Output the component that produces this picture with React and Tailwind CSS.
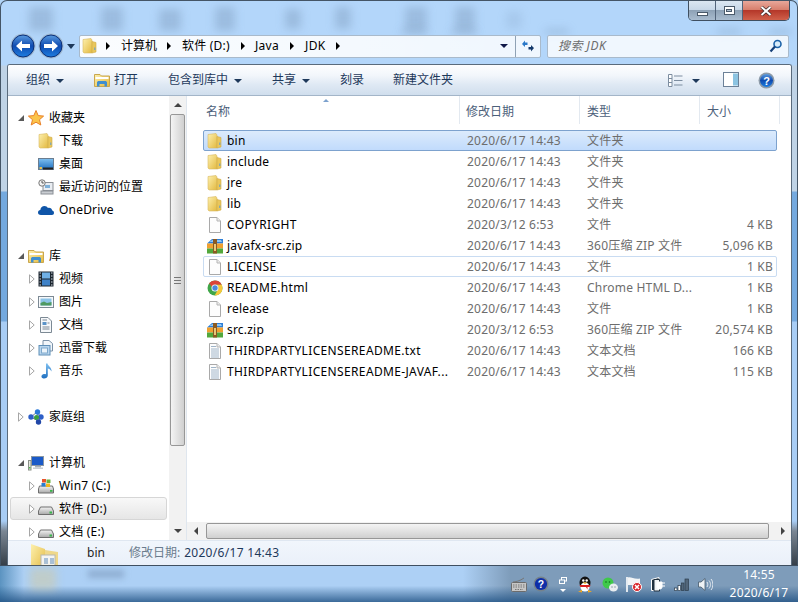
import React from 'react'

const Arrow = ({ className = '' }) => (
  <span className={`inline-block w-0 h-0 border-x-[4px] border-x-transparent border-t-[4px] border-t-[#1e395b] ${className}`} />
)

const CrumbArrow = () => (
  <span className="inline-block shrink-0 w-0 h-0 border-y-[4px] border-y-transparent border-l-[4px] border-l-black" />
)

const TreeOpen = () => (
  <svg width="6" height="6" viewBox="0 0 6 6" className="shrink-0"><path d="M6 0V6H0Z" fill="#595959" /></svg>
)

const TreeClosed = () => (
  <svg width="6" height="10" viewBox="0 0 6 10" className="shrink-0"><path d="M.5.8 5.2 5 .5 9.2Z" fill="#fff" stroke="#a6a6a6" /></svg>
)

const Defs = () => (
  <svg className="absolute w-0 h-0">
    <defs>
      <linearGradient id="fold" x1="0" y1="0" x2="1" y2="1">
        <stop offset="0" stopColor="#fdf0ae" />
        <stop offset="1" stopColor="#e3b93f" />
      </linearGradient>
      <linearGradient id="blue" x1="0" y1="0" x2="0" y2="1">
        <stop offset="0" stopColor="#7fc0f0" />
        <stop offset="1" stopColor="#1e6fc0" />
      </linearGradient>
      <linearGradient id="orb" x1="0" y1="0" x2="0" y2="1">
        <stop offset="0" stopColor="#5a9be0" />
        <stop offset=".5" stopColor="#0f4bb0" />
        <stop offset="1" stopColor="#1f7ee0" />
      </linearGradient>
      <linearGradient id="drive" x1="0" y1="0" x2="0" y2="1">
        <stop offset="0" stopColor="#f4f4f4" />
        <stop offset="1" stopColor="#a8a8a8" />
      </linearGradient>
    </defs>
  </svg>
)

const FolderIcon = () => (
  <svg width="16" height="16" viewBox="0 0 16 16">
    <path d="M1 1.500 9 .5 10 2V15H2L1 14Z" fill="url(#fold)" stroke="#d9b862" strokeWidth=".6" />
    <path d="M10 3.500 14 4.500V14L10 15Z" fill="#e9c65c" stroke="#d2ab45" strokeWidth=".6" />
    <rect x="12.300" y="9.500" width="1" height="2.500" fill="#5c9fd6" />
  </svg>
)

const DocIcon = ({ lines }) => (
  <svg width="16" height="16" viewBox="0 0 16 16">
    <path d="M2.500.5H10L13.500 4V15.500H2.500Z" fill="#fdfdfd" stroke="#a9a9a9" />
    <path d="M10 .5V4H13.500" fill="#ececec" stroke="#b5b5b5" />
    {lines && <path d="M4 3.500H9M4 6H12M4 8H12M4 10H12M4 12H12M4 14H12" stroke="#9fb4c8" strokeWidth="1" />}
  </svg>
)

const ZipIcon = () => (
  <svg width="16" height="16" viewBox="0 0 16 16">
    <path d="M0 5.500 5 1H16V5.500Z" fill="#2d7fd8" />
    <path d="M2 4 5.500 2H14L15 4Z" fill="#8fc6f4" />
    <rect y="5.500" width="16" height="5" fill="#f0a030" />
    <rect y="10.500" width="16" height="5" fill="#52a83c" />
    <rect x="6" y="1" width="4" height="14.500" fill="#8a5a22" />
    <rect x="7" y="6" width="2" height="7" fill="#e8c878" />
  </svg>
)

const ChromeIcon = () => (
  <svg width="16" height="16" viewBox="0 0 16 16">
    <circle cx="8" cy="8" r="7.500" fill="#3fa648" />
    <path d="M8 .5A7.500 7.500 0 0 1 14.700 4.700H8A3.300 3.300 0 0 0 4.900 7L2.100 3.300A7.500 7.500 0 0 1 8 .5Z" fill="#dc4437" />
    <path d="M14.700 4.700A7.500 7.500 0 0 1 7.600 15.500L10.700 10A3.300 3.300 0 0 0 11 6.400L10 4.700Z" fill="#f7c83a" />
    <circle cx="8" cy="8" r="3.500" fill="#fff" />
    <circle cx="8" cy="8" r="2.700" fill="#4a89dc" />
  </svg>
)

const StarIcon = () => (
  <svg width="16" height="16" viewBox="0 0 16 16">
    <path d="M8 .5 10.200 5.600 15.600 6.100 11.500 9.700 12.800 15 8 12.200 3.200 15 4.500 9.700.4 6.100 5.800 5.600Z" fill="#fbc44a" stroke="#e8802a" strokeWidth="1" />
  </svg>
)

const DesktopIcon = () => (
  <svg width="16" height="16" viewBox="0 0 16 16">
    <rect x=".5" y="2.500" width="15" height="11" fill="url(#blue)" stroke="#6b7d90" />
    <rect x="5" y="11.500" width="10" height="2" fill="#222" />
    <rect x="1.500" y="11" width="2.500" height="2" fill="#e8c14f" />
  </svg>
)

const RecentIcon = () => (
  <svg width="16" height="16" viewBox="0 0 16 16">
    <rect x="5" y="3.500" width="10" height="8" fill="#e9edf2" stroke="#8a8f96" />
    <rect x="7" y="6" width="5" height="3" fill="#7fb0d8" />
    <rect x="3" y="12" width="12" height="3" fill="#c9cdd2" stroke="#8a8f96" />
    <circle cx="4" cy="4" r="3.200" fill="#f3f3f3" stroke="#777" />
    <path d="M4 2V4H5.800" stroke="#555" fill="none" />
  </svg>
)

const CloudIcon = () => (
  <svg width="16" height="16" viewBox="0 0 16 16">
    <path d="M3 13C.8 13 0 11.600 0 10.400 0 9 1 8 2.300 8 2.600 5.600 4.400 4 6.500 4 8 4 9.200 4.700 10 6 12 5.400 14 6.600 14.200 8.600 15.300 8.800 16 9.800 16 11 16 12.100 15.200 13 14 13Z" fill="#0f55a8" />
  </svg>
)

const LibraryIcon = () => (
  <svg width="16" height="16" viewBox="0 0 16 16">
    <path d="M.5 2.500H6L7.500 4H15.500V14.500H.5Z" fill="url(#fold)" stroke="#c9a64e" />
    <path d="M1.500 5H14.500V7H1.500Z" fill="#fff" />
    <path d="M3 14.500V10.500C3 9.500 4 9 5 9H11C12 9 13 9.500 13 10.500V14.500H10.500V12H5.500V14.500Z" fill="#3f8ed0" />
  </svg>
)

const VideoIcon = () => (
  <svg width="16" height="16" viewBox="0 0 16 16">
    <rect x=".5" y=".5" width="15" height="15" fill="#1c2630" />
    <rect x="4" y="1.500" width="8" height="6" fill="#6fb0e6" />
    <rect x="4" y="8.500" width="8" height="6" fill="#3f82c8" />
    <path d="M1.500 2H3M1.500 5H3M1.500 8H3M1.500 11H3M1.500 14H3M13 2H14.500M13 5H14.500M13 8H14.500M13 11H14.500M13 14H14.500" stroke="#cfd8e0" strokeWidth="1.200" />
  </svg>
)

const PictureIcon = () => (
  <svg width="16" height="16" viewBox="0 0 16 16">
    <rect x=".5" y="2.500" width="15" height="11" fill="#f7f9fb" stroke="#7c8994" />
    <rect x="2.500" y="4.500" width="11" height="7" fill="#8cc4e8" />
    <path d="M2.500 11.500V9L6 7.500 9 9 13.500 8V11.500Z" fill="#4f9a62" />
  </svg>
)

const DocsIcon = () => (
  <svg width="16" height="16" viewBox="0 0 16 16">
    <path d="M2.500.5H10L13.500 4V15.500H2.500Z" fill="#f6f8fa" stroke="#7c8994" />
    <rect x="4.500" y="5" width="4" height="3" fill="#5a93c8" />
    <path d="M4.500 3H9M9.500 6H11.500M4.500 10H11.500M4.500 12H11.500" stroke="#7a8794" />
  </svg>
)

const ThunderIcon = () => (
  <svg width="16" height="16" viewBox="0 0 16 16">
    <path d="M5 .5H11L14.500 3.500V11H5Z" fill="#f2f6fa" stroke="#7c92a8" />
    <rect x="1" y="5.500" width="11" height="9.500" fill="#b9d6ee" stroke="#5f8fb8" />
    <rect x="3.500" y="8" width="6" height="5" fill="#eaf3fa" stroke="#7ea8cc" />
  </svg>
)

const MusicIcon = () => (
  <svg width="16" height="16" viewBox="0 0 16 16">
    <path d="M8 .5 9.500.5C10 3 14 4.500 13.500 8.500 12.500 6.500 11 5.500 9.800 5.500V12.500C9.800 14.500 7.500 15.800 5.500 15.500 3.500 15.200 3 13.500 3.800 12.300 4.700 11 6.700 10.700 8 11.300Z" fill="url(#blue)" />
  </svg>
)

const HomeGroupIcon = () => (
  <svg width="16" height="16" viewBox="0 0 16 16">
    <path d="M3 8 9 3M3 8 12 13M9 3 12 13M9 3 13 8" stroke="#6a7c90" />
    <circle cx="3" cy="8" r="2.700" fill="#2e5fc8" />
    <circle cx="9.500" cy="3" r="2.700" fill="#2a78d8" />
    <circle cx="13" cy="8" r="2.700" fill="#2e5fc8" />
    <circle cx="8.500" cy="8.500" r="2.500" fill="#3aa040" />
    <circle cx="10.500" cy="13" r="2.700" fill="#2147a8" />
  </svg>
)

const ComputerIcon = () => (
  <svg width="16" height="16" viewBox="0 0 16 16">
    <rect x="3.500" y="1.500" width="12" height="9" fill="#1a5ac8" stroke="#8a97a3" />
    <rect x="7" y="11" width="6" height="1.500" fill="#a8b0b8" />
    <rect x="5" y="12.500" width="10" height="1.500" fill="#c8ced4" />
    <rect x=".5" y="5.500" width="2.500" height="9.500" fill="#e6e8e0" stroke="#8a9088" />
    <rect x="1" y="12" width="1.500" height="1.500" fill="#4db84a" />
  </svg>
)

const DriveIcon = () => (
  <svg width="16" height="16" viewBox="0 0 16 16">
    <path d="M2.500 6H13.500L15.500 10V13.500H.5V10Z" fill="url(#drive)" stroke="#6e6e6e" />
    <rect x="11.500" y="10.500" width="2.500" height="2" fill="#39b54a" />
  </svg>
)

const Win7DriveIcon = () => (
  <svg width="16" height="16" viewBox="0 0 16 16">
    <path d="M1.500 8H14.500L15.500 11V15H.5V11Z" fill="url(#drive)" stroke="#6e6e6e" />
    <rect x="12" y="12" width="2.500" height="1.800" fill="#39b54a" />
    <rect x="4" y="1" width="4" height="3.500" fill="#e8552d" />
    <rect x="8.500" y="1.500" width="4" height="3.500" fill="#6cb33f" />
    <rect x="3.500" y="5" width="4" height="3.500" fill="#2a7ed0" />
    <rect x="8" y="5.500" width="4" height="3.500" fill="#f2b81d" />
  </svg>
)

const navRows = [
  { label: '收藏夹', icon: <StarIcon />, head: 'open' },
  { label: '下载', icon: <FolderIcon /> },
  { label: '桌面', icon: <DesktopIcon /> },
  { label: '最近访问的位置', icon: <RecentIcon /> },
  { label: 'OneDrive', icon: <CloudIcon />, latin: true },
  null,
  { label: '库', icon: <LibraryIcon />, head: 'open' },
  { label: '视频', icon: <VideoIcon />, arrow: true },
  { label: '图片', icon: <PictureIcon />, arrow: true },
  { label: '文档', icon: <DocsIcon />, arrow: true },
  { label: '迅雷下载', icon: <ThunderIcon />, arrow: true },
  { label: '音乐', icon: <MusicIcon />, arrow: true },
  null,
  { label: '家庭组', icon: <HomeGroupIcon />, head: 'closed' },
  null,
  { label: '计算机', icon: <ComputerIcon />, head: 'open' },
  { label: 'Win7 (C:)', icon: <Win7DriveIcon />, arrow: true, latin: true },
  { label: '软件 (D:)', icon: <DriveIcon />, arrow: true, hover: true, latin: true },
  { label: '文档 (E:)', icon: <DriveIcon />, arrow: true, latin: true },
]

const files = [
  { name: 'bin', icon: <FolderIcon />, date: '2020/6/17 14:43', type: '文件夹', size: '', state: 'selected' },
  { name: 'include', icon: <FolderIcon />, date: '2020/6/17 14:43', type: '文件夹', size: '' },
  { name: 'jre', icon: <FolderIcon />, date: '2020/6/17 14:43', type: '文件夹', size: '' },
  { name: 'lib', icon: <FolderIcon />, date: '2020/6/17 14:43', type: '文件夹', size: '' },
  { name: 'COPYRIGHT', icon: <DocIcon />, date: '2020/3/12 6:53', type: '文件', size: '4 KB', caps: true },
  { name: 'javafx-src.zip', icon: <ZipIcon />, date: '2020/6/17 14:43', type: '360压缩 ZIP 文件', size: '5,096 KB' },
  { name: 'LICENSE', icon: <DocIcon />, date: '2020/6/17 14:43', type: '文件', size: '1 KB', state: 'focus', caps: true },
  { name: 'README.html', icon: <ChromeIcon />, date: '2020/6/17 14:43', type: 'Chrome HTML D...', size: '1 KB', caps: true },
  { name: 'release', icon: <DocIcon />, date: '2020/6/17 14:43', type: '文件', size: '1 KB' },
  { name: 'src.zip', icon: <ZipIcon />, date: '2020/3/12 6:53', type: '360压缩 ZIP 文件', size: '20,574 KB' },
  { name: 'THIRDPARTYLICENSEREADME.txt', icon: <DocIcon lines />, date: '2020/6/17 14:43', type: '文本文档', size: '166 KB', caps: true },
  { name: 'THIRDPARTYLICENSEREADME-JAVAF...', icon: <DocIcon lines />, date: '2020/6/17 14:43', type: '文本文档', size: '115 KB', caps: true },
]

const ghosts = [
  'left-[28px] top-[6px] w-[24px] h-[24px]',
  'left-[100px] top-[6px] w-[22px] h-[24px]',
  'left-[158px] top-[8px] w-[22px] h-[22px]',
  'left-[214px] top-[6px] w-[20px] h-[24px]',
  'left-[284px] top-[8px] w-[16px] h-[20px]',
  'left-[334px] top-[6px] w-[16px] h-[22px]',
  'left-[404px] top-[6px] w-[22px] h-[24px]',
  'left-[454px] top-[6px] w-[20px] h-[24px]',
  'left-[505px] top-[10px] w-[16px] h-[18px] opacity-50',
  'left-[544px] top-[28px] w-[24px] h-[5px]',
  'left-[400px] top-[28px] w-[26px] h-[5px]',
  'left-[450px] top-[28px] w-[26px] h-[5px]',
  'left-[716px] top-[28px] w-[24px] h-[5px]',
  'left-[768px] top-[28px] w-[22px] h-[5px]',
]

function NavRow({ row }) {
  if (!row) return <div className="h-[23px] shrink-0" />
  return (
    <div
      className={`h-[23px] flex items-center shrink-0 ${row.hover ? 'ml-[2px] mr-[2px] rounded-[3px] border border-[#d6d6d6] bg-[linear-gradient(#f8f8f8,#e6e6e6)]' : 'border border-transparent ml-[2px] mr-[2px]'}`}
    >
      <span className={`flex items-center justify-center w-[6px] ${row.head ? 'ml-[7px]' : 'ml-[18px]'}`}>
        {row.head === 'open' && <TreeOpen />}
        {row.head === 'closed' && <TreeClosed />}
        {row.arrow && <TreeClosed />}
      </span>
      <span className={`w-[16px] h-[16px] shrink-0 ${row.head ? 'ml-[4px]' : 'ml-[3px]'}`}>{row.icon}</span>
      <span className={`ml-[5px] text-black whitespace-nowrap ${row.latin ? 'tracking-[0.2px]' : ''}`}>{row.label}</span>
    </div>
  )
}

function FileRow({ file }) {
  const stateClass =
    file.state === 'selected'
      ? 'border-[#7da2ce] bg-[linear-gradient(#dcebfc,#c1dbfc)]'
      : file.state === 'focus'
        ? 'border-[#c9dcf2]'
        : 'border-transparent'
  return (
    <div className={`ml-[16px] w-[574px] h-[21px] grid grid-cols-[263px_120px_120px_69px] items-center rounded-[2px] border tracking-[0.2px] ${stateClass}`}>
      <div className="flex items-center min-w-0">
        <span className="ml-[3px] w-[16px] h-[16px] shrink-0">{file.icon}</span>
        <span className={`ml-[4px] text-black whitespace-nowrap ${file.caps ? 'tracking-[0.35px]' : ''}`}>{file.name}</span>
      </div>
      <span className="text-[#6d6d6d] whitespace-nowrap">{file.date}</span>
      <span className="text-[#6d6d6d] whitespace-nowrap">{file.type}</span>
      <span className="text-[#6d6d6d] text-right pr-[3px] whitespace-nowrap">{file.size}</span>
    </div>
  )
}

const ScrollBtn = ({ dir }) => (
  <div className="w-[17px] h-[18px] shrink-0 flex items-center justify-center">
    {dir === 'up' && <span className="w-0 h-0 border-x-[4px] border-x-transparent border-b-[4px] border-b-[#444]" />}
    {dir === 'down' && <span className="w-0 h-0 border-x-[4px] border-x-transparent border-t-[4px] border-t-[#444]" />}
    {dir === 'left' && <span className="w-0 h-0 border-y-[4px] border-y-transparent border-r-[4px] border-r-[#444]" />}
    {dir === 'right' && <span className="w-0 h-0 border-y-[4px] border-y-transparent border-l-[4px] border-l-[#444]" />}
  </div>
)

const HeaderCell = ({ children, className = '' }) => (
  <div className={`h-full flex items-center pt-[3px] border-r border-[#e3e9f0] text-[#4c607a] whitespace-nowrap ${className}`}>{children}</div>
)

const ToolItem = ({ children, className = '', arrow }) => (
  <div className={`flex items-center text-[#1e395b] whitespace-nowrap ${className}`}>
    {children}
    {arrow && <Arrow className="ml-[6px] mt-[1px]" />}
  </div>
)

function TitleButtons() {
  return (
    <div className="flex h-[20px] mr-[7px] border border-t-0 border-[#3f4f60] rounded-b-[5px] overflow-hidden">
      <div className="w-[27px] border-r border-[#52647a] bg-[linear-gradient(#dbe7f2_0%,#c8d8e8_45%,#8ea2b6_50%,#a9bccf_100%)] flex items-end justify-center pb-[4px]">
        <span className="w-[11px] h-[4px] bg-white border border-[#4a5a6a]" />
      </div>
      <div className="w-[27px] border-r border-[#52647a] bg-[linear-gradient(#dbe7f2_0%,#c8d8e8_45%,#8ea2b6_50%,#a9bccf_100%)] flex items-center justify-center">
        <span className="w-[11px] h-[9px] bg-white border border-[#4a5a6a] flex items-center justify-center">
          <span className="w-[6px] h-[3px] bg-[#aebfd0] border border-[#4a5a6a]" />
        </span>
      </div>
      <div className="w-[46px] bg-[linear-gradient(#e8a79a_0%,#d8806e_45%,#b5382a_50%,#d0604a_100%)] flex items-center justify-center">
        <svg width="12" height="10" viewBox="0 0 12 10">
          <path d="M1.500 1 10.500 9M10.500 1 1.500 9" stroke="#3a2a2a" strokeWidth="3.400" />
          <path d="M1.500 1 10.500 9M10.500 1 1.500 9" stroke="#fff" strokeWidth="2" />
        </svg>
      </div>
    </div>
  )
}

function AddressRow() {
  return (
    <div className="h-[24px] flex items-center shrink-0">
      <div className="ml-[9px] flex items-center shrink-0">
        <svg width="27" height="26" viewBox="0 0 27 26">
          <circle cx="13" cy="13" r="12.500" fill="#9fb8d0" />
          <circle cx="13" cy="13" r="11" fill="url(#orb)" stroke="#0b2f78" />
          <path d="M6 13 12 7.500V11H20V15H12V18.500Z" fill="#fff" />
        </svg>
        <svg width="27" height="26" viewBox="0 0 27 26" className="ml-[1px]">
          <circle cx="13" cy="13" r="12.500" fill="#9fb8d0" />
          <circle cx="13" cy="13" r="11" fill="url(#orb)" stroke="#0b2f78" />
          <path d="M20 13 14 7.500V11H6V15H14V18.500Z" fill="#fff" />
        </svg>
        <span className="ml-[2px] mr-[4px] mt-[1px] w-0 h-0 border-x-[4px] border-x-transparent border-t-[5px] border-t-[#1e395b]" />
      </div>
      <div className="w-[462px] h-[23px] rounded-[2px] border border-[#a9bacb] bg-[linear-gradient(90deg,rgba(255,255,255,.94),rgba(255,255,255,.8))] flex items-center text-black">
        <span className="ml-[2px] w-[16px] h-[16px] shrink-0"><FolderIcon /></span>
        <span className="ml-[8px] flex"><CrumbArrow /></span>
        <span className="ml-[11px] w-[36px] shrink-0">计算机</span>
        <span className="ml-[10px] flex"><CrumbArrow /></span>
        <span className="ml-[11px] w-[48px] shrink-0 whitespace-nowrap tracking-[0.2px]">软件 (D:)</span>
        <span className="ml-[11px] flex"><CrumbArrow /></span>
        <span className="ml-[10px] w-[24px] shrink-0 tracking-[0.3px]">Java</span>
        <span className="ml-[11px] flex"><CrumbArrow /></span>
        <span className="ml-[11px] w-[22px] shrink-0 tracking-[0.4px]">JDK</span>
        <span className="ml-[9px] flex"><CrumbArrow /></span>
        <span className="ml-auto mr-[7px] w-0 h-0 border-x-[4px] border-x-transparent border-t-[4px] border-t-[#101848]" />
        <div className="h-full w-[25px] border-l border-[#8fa2b5] flex items-center justify-center">
          <svg width="14" height="14" viewBox="0 0 14 14">
            <path d="M1 5 4 1.500V3.500H6.500V6H4V8Z" fill="#2a78c8" />
            <path d="M13 9 10 12.500V10.500H7.500V8H10V6Z" fill="#14396b" />
          </svg>
        </div>
      </div>
      <div className="ml-[6px] w-[242px] h-[23px] rounded-[2px] border border-[#a9bacb] bg-white/80 flex items-center">
        <span className="ml-[10px] italic text-[#6d6d6d] whitespace-nowrap tracking-[0.5px]">搜索 JDK</span>
        <svg width="14" height="14" viewBox="0 0 14 14" className="ml-auto mr-[5px]">
          <circle cx="8.500" cy="5" r="3.500" fill="#d8ecfa" stroke="#1c62a8" strokeWidth="1.600" />
          <path d="M6 7.500 1.500 12.500" stroke="#153f78" strokeWidth="2.200" />
        </svg>
      </div>
    </div>
  )
}

function Toolbar() {
  return (
    <div className="h-[31px] shrink-0 flex items-center border-b border-[#a3b5c8] bg-[linear-gradient(#fdfeff_0%,#f2f6fb_35%,#dfe9f4_65%,#d0deed_100%)]">
      <ToolItem className="ml-[18px]" arrow>组织</ToolItem>
      <span className="ml-[30px] w-[16px] h-[16px]"><LibraryIcon /></span>
      <ToolItem className="ml-[4px]">打开</ToolItem>
      <ToolItem className="ml-[30px]" arrow>包含到库中</ToolItem>
      <ToolItem className="ml-[30px]" arrow>共享</ToolItem>
      <ToolItem className="ml-[30px]">刻录</ToolItem>
      <ToolItem className="ml-[29px]">新建文件夹</ToolItem>
      <svg width="15" height="13" viewBox="0 0 15 13" className="ml-[215px]">
        <path d="M.5.5H4V12.500H.5Z" fill="#fff" stroke="#7c8da0" />
        <path d="M1 4.500H4M1 8.500H4" stroke="#7c8da0" />
        <path d="M6 2H14.500M6 6.500H14.500M6 11H14.500" stroke="#7c8da0" />
      </svg>
      <Arrow className="ml-[9px] mt-[1px]" />
      <svg width="17" height="16" viewBox="0 0 17 16" className="ml-[23px]">
        <rect x=".5" y=".5" width="15" height="14" fill="#fff" stroke="#6c8198" />
        <rect x="10" y="1.500" width="5" height="12" fill="#8cc4e2" />
      </svg>
      <svg width="17" height="17" viewBox="0 0 17 17" className="ml-[18px]">
        <circle cx="8.500" cy="8.500" r="8" fill="#8c9aa8" />
        <circle cx="8.500" cy="8.500" r="6.500" fill="url(#orb)" />
        <text x="8.500" y="12.500" textAnchor="middle" fontSize="11" fontWeight="700" fill="#fff" fontFamily="Liberation Sans">?</text>
      </svg>
    </div>
  )
}

function NavPane() {
  return (
    <div className="w-[179px] shrink-0 flex border-r border-[#dfe6ee] bg-white">
      <div className="w-[162px] overflow-hidden pt-[10px] flex flex-col">
        {navRows.map((row, i) => <NavRow key={i} row={row} />)}
      </div>
      <div className="w-[17px] flex flex-col bg-[#f2f2f2]">
        <ScrollBtn dir="up" />
        <div className="mx-[1px] h-[332px] shrink-0 rounded-[2px] border border-[#979797] bg-[linear-gradient(90deg,#f4f4f4,#d0d0d0)] flex items-center justify-center">
          <span className="w-[7px] h-[7px] border-y border-[#777] flex items-center"><span className="w-full h-px bg-[#777]" /></span>
        </div>
        <div className="flex-1" />
        <ScrollBtn dir="down" />
      </div>
    </div>
  )
}

function FilePane() {
  return (
    <div className="flex-1 min-w-0 flex flex-col bg-white">
      <div className="relative h-[29px] shrink-0 grid grid-cols-[273px_120px_120px_80px] pb-[1px]">
        <HeaderCell className="pl-[19px]">名称</HeaderCell>
        <HeaderCell className="pl-[6px]">修改日期</HeaderCell>
        <HeaderCell className="pl-[7px]">类型</HeaderCell>
        <HeaderCell className="pl-[7px]">大小</HeaderCell>
        <span className="absolute left-[136px] top-[3px] w-0 h-0 border-x-[3px] border-x-transparent border-b-[3px] border-b-[#7da2ce]" />
      </div>
      <div className="flex-1 pt-[5px] flex flex-col min-h-0">
        {files.map((file) => <FileRow key={file.name} file={file} />)}
      </div>
      <div className="h-[18px] shrink-0 flex bg-[#f2f2f2]">
        <ScrollBtn dir="left" />
        <div className="w-[563px] my-[1px] ml-[2px] rounded-[2px] border border-[#979797] bg-[linear-gradient(#f4f4f4,#d0d0d0)]" />
        <div className="flex-1" />
        <ScrollBtn dir="right" />
      </div>
    </div>
  )
}

function StatusBar() {
  return (
    <div className="relative h-[25px] shrink-0 flex items-center overflow-hidden border-t border-[#dfe7f1] bg-[linear-gradient(#f1f6fc,#eaf0f9)]">
      <svg width="30" height="36" viewBox="0 0 30 36" className="absolute left-[22px] top-[2px]">
        <path d="M1 1 15 6V30H1Z" fill="url(#fold)" />
        <path d="M15 7 28 9V32H15Z" fill="#efd88a" />
        <rect x="11" y="12" width="14" height="16" fill="#f5f5f2" stroke="#b8b8b0" />
        <rect x="14" y="15" width="4" height="6" fill="#a8c0d8" />
        <rect x="20" y="15" width="4" height="6" fill="#a8c0d8" />
      </svg>
      <span className="ml-[79px] text-[#1e1e1e]">bin</span>
      <span className="ml-[24px] text-[#6b7c8d] whitespace-nowrap">修改日期:</span>
      <span className="ml-[4px] text-[#1e395b] whitespace-nowrap tracking-[0.3px]">2020/6/17 14:43</span>
    </div>
  )
}

function Tray() {
  return (
    <div className="flex items-center h-full pl-[511px]">
      <svg width="16" height="15" viewBox="0 0 16 15">
        <path d="M2 5C4 5 9 4 13 1" stroke="#777" fill="none" />
        <rect x=".5" y="5.500" width="15" height="9" rx="1" fill="#c6c6c6" stroke="#6c6c6c" />
        <path d="M2 8H14M2 10H14M4 12.500H12" stroke="#777" strokeDasharray="1.500 1" />
      </svg>
      <svg width="16" height="16" viewBox="0 0 17 17" className="ml-[6px]">
        <circle cx="8.500" cy="8.500" r="8" fill="#75828c" />
        <circle cx="8.500" cy="8.500" r="6.500" fill="#0f2fa8" />
        <text x="8.500" y="12.500" textAnchor="middle" fontSize="11" fontWeight="700" fill="#fff" fontFamily="Liberation Sans">?</text>
      </svg>
      <div className="ml-[10px] w-[8px] flex flex-col items-center">
        <svg width="8" height="7" viewBox="0 0 8 7">
          <rect x="2.500" y=".5" width="5" height="3.500" fill="none" stroke="#fff" />
          <rect x=".5" y="3" width="5" height="3.500" fill="#7e9cba" stroke="#fff" />
        </svg>
        <span className="mt-[5px] w-0 h-0 border-x-[3px] border-x-transparent border-t-[3px] border-t-white" />
      </div>
      <svg width="16" height="17" viewBox="0 0 16 17" className="ml-[10px]">
        <ellipse cx="8" cy="7" rx="5.500" ry="6.500" fill="#111" />
        <ellipse cx="8" cy="11" rx="4.500" ry="4.500" fill="#fff" />
        <circle cx="6.300" cy="4.500" r="1.200" fill="#fff" />
        <circle cx="9.700" cy="4.500" r="1.200" fill="#fff" />
        <path d="M5.500 6.500H10.500L8 8Z" fill="#f4b81c" />
        <path d="M2.500 9H13.500L12.500 11H10.500V13.500L9 11H3.500Z" fill="#d81e1e" />
        <path d="M1 15.500 5 14V16.500ZM15 15.500 11 14V16.500Z" fill="#f4a81c" />
      </svg>
      <svg width="16" height="15" viewBox="0 0 16 15" className="ml-[9px]">
        <ellipse cx="6" cy="6" rx="5.500" ry="5.500" fill="#3fc94a" />
        <circle cx="4" cy="5" r=".8" fill="#0d6a1a" />
        <circle cx="7.500" cy="5" r=".8" fill="#0d6a1a" />
        <ellipse cx="11.500" cy="10.500" rx="4.500" ry="4" fill="#e9edf0" />
        <circle cx="10" cy="10" r=".7" fill="#7c8a94" />
        <circle cx="13" cy="10" r=".7" fill="#7c8a94" />
      </svg>
      <svg width="16" height="16" viewBox="0 0 16 16" className="ml-[8px]">
        <path d="M1 1V16" stroke="#fff" strokeWidth="1.600" />
        <path d="M2 1.500C5 .5 8 3.500 14 2.500V9H2Z" fill="#f2f4f6" />
        <circle cx="11" cy="11" r="4.500" fill="#d8242a" stroke="#fff" />
        <path d="M9 9 13 13M13 9 9 13" stroke="#fff" strokeWidth="1.500" />
      </svg>
      <svg width="15" height="16" viewBox="0 0 15 16" className="ml-[9px]">
        <path d="M.5 3.500 8 1.500V14.500H.5Z" fill="#20303e" stroke="#fff" />
        <path d="M3 3.500H8.500V15H3Z" fill="#f2f4f6" stroke="#20303e" />
        <path d="M9 7H14M9 10H14M6 6H11V11C11 12.500 10 13 8.500 13S6 12.500 6 11Z" fill="#fff" stroke="#fff" />
      </svg>
      <svg width="16" height="13" viewBox="0 0 16 13" className="ml-[8px]">
        <rect x=".5" y="10" width="2.500" height="2.500" fill="#fff" stroke="#2c3c4c" strokeWidth=".7" />
        <rect x="4" y="7.500" width="2.500" height="5" fill="#fff" stroke="#2c3c4c" strokeWidth=".7" />
        <rect x="7.500" y="5" width="2.500" height="7.500" fill="#52667a" stroke="#2c3c4c" strokeWidth=".7" />
        <rect x="11" y="1" width="3.500" height="11.500" fill="#52667a" stroke="#2c3c4c" strokeWidth=".7" />
      </svg>
      <svg width="15" height="15" viewBox="0 0 15 15" className="ml-[8px]">
        <path d="M.5 5H3L7 1.500V13.500L3 10H.5Z" fill="#eef2f5" stroke="#45586a" strokeWidth=".8" />
        <path d="M9 5C10 6.500 10 8.500 9 10M11 3.500C13 6 13 9 11 11.500M13 2C15.500 5 15.500 10 13 13" stroke="#e4eaf0" strokeWidth="1" fill="none" />
      </svg>
      <div className="ml-[10px] w-[72px] flex flex-col items-center text-white leading-[18px] tracking-[0.2px]">
        <span>14:55</span>
        <span className="whitespace-nowrap">2020/6/17</span>
      </div>
    </div>
  )
}

export default function App() {
  return (
    <div className="relative w-[798px] h-[602px] overflow-hidden flex flex-col text-[12px] leading-none font-['Noto_Sans','Noto_Sans_CJK_SC',sans-serif] bg-[#b1d4f7]">
      <Defs />
      <div className="relative h-[565px] shrink-0 flex flex-col rounded-t-[7px] border-t border-x border-[#445566] bg-[linear-gradient(180deg,#b3d6fa_0,#b3d6fa_64px,#bfd3e6_65px,#bfd3e6_190px,#74a9de_191px,#74a9de_320px,#a8cdf5_321px,#a8cdf5_520px,#7b8794_530px,#333d47_565px)]">
        {ghosts.map((g) => (
          <span key={g} className={`absolute rounded-[3px] bg-[#6f8cae]/35 blur-[4px] ${g}`} />
        ))}
        <div className="relative h-[33px] shrink-0 flex justify-end">
          <TitleButtons />
        </div>
        <div className="relative">
          <AddressRow />
        </div>
        <div className="relative mt-[6px] ml-[6px] w-[785px] h-[501px] flex flex-col rounded-t-[3px] border border-b-0 border-[#5a6b7c] overflow-hidden bg-white">
          <Toolbar />
          <div className="flex-1 flex min-h-0">
            <NavPane />
            <FilePane />
          </div>
          <StatusBar />
        </div>
      </div>
      <div className="relative flex-1 border-t border-[#3f4f60] bg-[linear-gradient(180deg,rgba(30,80,130,0)_0%,rgba(30,80,130,0)_55%,rgba(30,80,130,.8)_100%),linear-gradient(90deg,#5b93c0_0%,#add0f5_3%,#add0f5_58%,#7e9cba_64%,#7e9cba_100%)]">
        <span className="absolute left-[30px] top-[2px] w-[26px] h-[22px] bg-[#dcc98a]/40 blur-[4px]" />
        <span className="absolute left-[88px] top-[4px] w-[36px] h-[8px] bg-[#6f8cae]/50 blur-[3px]" />
        <Tray />
      </div>
    </div>
  )
}
